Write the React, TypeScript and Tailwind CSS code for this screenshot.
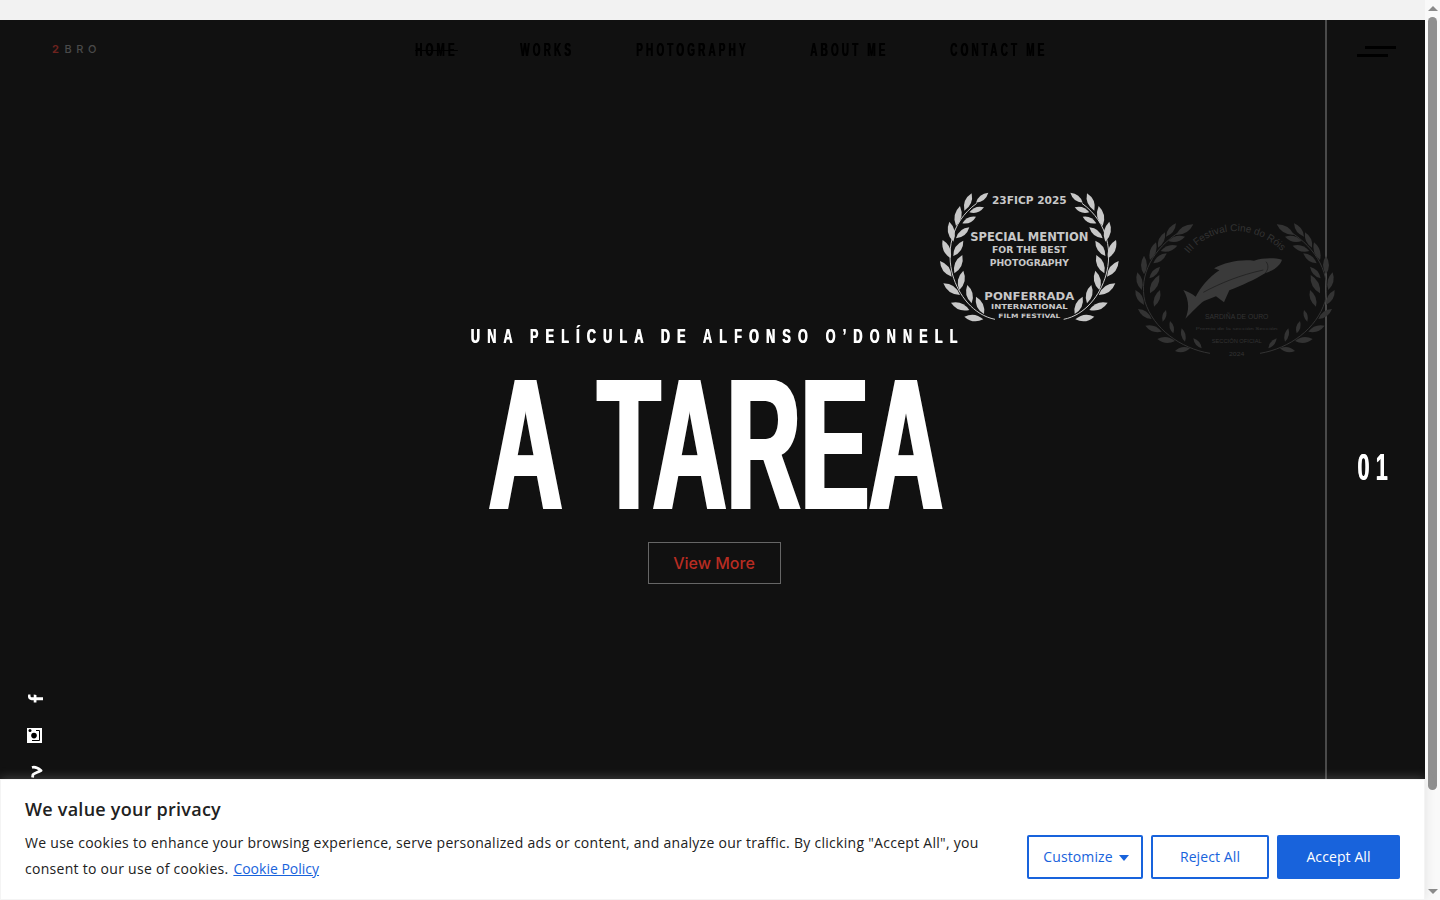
import React from "react";
import { FaFacebookF } from "react-icons/fa";

type Leaf = [number, number, number, number];

function leafPath([bx, by, tx, ty]: Leaf, w: number) {
  const mx = (bx + tx) / 2;
  const my = (by + ty) / 2;
  const dx = tx - bx;
  const dy = ty - by;
  const nx = -dy * w;
  const ny = dx * w;
  return `M${bx} ${by}Q${mx + nx} ${my + ny} ${tx} ${ty}Q${mx - nx} ${my - ny} ${bx} ${by}Z`;
}

const leavesA: Leaf[] = [
  [138, 68, 175, 38], [103, 92, 125, 40], [78, 138, 90, 78], [70, 185, 58, 125], [62, 235, 38, 180],
  [65, 290, 30, 243], [90, 345, 40, 310], [118, 390, 63, 368], [160, 418, 103, 410],
  [118, 97, 162, 82], [97, 130, 138, 110], [78, 175, 118, 142], [70, 228, 100, 182], [73, 280, 97, 225],
  [88, 330, 100, 272], [125, 370, 112, 315], [162, 402, 138, 350],
];

const leavesB: Leaf[] = [
  [138, 60, 190, 28], [108, 65, 138, 25], [84, 98, 105, 52], [60, 135, 78, 82], [42, 178, 42, 122],
  [35, 225, 22, 172], [42, 270, 16, 225], [65, 312, 24, 282], [95, 350, 46, 332], [135, 378, 82, 372], [180, 400, 135, 408],
  [115, 78, 165, 65], [92, 108, 142, 92], [70, 145, 110, 115], [58, 190, 90, 155], [60, 235, 88, 180],
  [72, 275, 90, 225], [98, 320, 108, 285], [130, 355, 120, 318], [165, 380, 155, 340], [215, 400, 190, 370],
];

function Wreath({ leaves, cx, stem, color, w }: { leaves: Leaf[]; cx: number; stem: string; color: string; w: number }) {
  const side = (
    <>
      <path d={stem} fill="none" stroke={color} strokeWidth="3" />
      {leaves.map((l, i) => (
        <path key={i} d={leafPath(l, w)} fill={color} />
      ))}
    </>
  );
  return (
    <>
      {side}
      <g transform={`translate(${cx * 2} 0) scale(-1 1)`}>{side}</g>
    </>
  );
}

function Ponferrada() {
  const t = (s: string, y: number, len: number, size: number) => (
    <text x="298" y={y} textAnchor="middle" textLength={len} lengthAdjust="spacingAndGlyphs" fontSize={size} fontWeight="700" fill="#c8c8c8" fontFamily="'DejaVu Sans', sans-serif">
      {s}
    </text>
  );
  return (
    <svg viewBox="0 0 600 450" className="absolute left-[930px] top-[160px] w-[200px] h-[150px]">
      <Wreath leaves={leavesA} cx={298} w={0.34} color="#c8c8c8" stem="M195 418C130 405 85 345 68 285C50 220 58 130 140 70" />
      {t("23FICP 2025", 71, 224, 31)}
      {t("SPECIAL MENTION", 182, 355, 36)}
      {t("FOR THE BEST", 220, 224, 26)}
      {t("PHOTOGRAPHY", 259, 238, 27)}
      {t("PONFERRADA", 361, 270, 32)}
      {t("INTERNATIONAL", 388, 230, 21)}
      {t("FILM FESTIVAL", 414, 186, 18)}
    </svg>
  );
}

function Sardina() {
  const c = "#333333";
  const t = (s: string, y: number, len: number, size: number) => (
    <text x="320" y={y} textAnchor="middle" textLength={len} lengthAdjust="spacingAndGlyphs" fontSize={size} fill={c} fontFamily="'Liberation Sans', sans-serif">
      {s}
    </text>
  );
  return (
    <svg viewBox="0 0 630 450" className="absolute left-[1130px] top-[195px] w-[210px] h-[150px]">
      <Wreath leaves={leavesB} cx={315} w={0.32} color={c} stem="M240 415C150 400 70 340 45 260C25 180 70 100 150 50" />
      <path id="sardina-arc" d="M175 118C250 25 380 25 465 118" fill="none" />
      <text fontSize="30" fill={c} fontFamily="'Liberation Sans', sans-serif">
        <textPath href="#sardina-arc" startOffset="2">
          III Festival Cine do Róis
        </textPath>
      </text>
      <path
        d="M160 225C172 230 186 236 197 245C212 218 236 186 268 166L252 160C285 142 330 132 372 137C400 128 432 128 456 134C452 150 432 166 405 175C375 194 335 212 298 226L282 262L258 244L222 258C205 270 188 290 166 311C178 285 178 255 160 225Z"
        fill="#3a3a3a"
      />
      <path d="M408 140C416 150 416 162 406 174M220 232C270 205 330 180 400 165" fill="none" stroke="#1a1a1a" strokeWidth="2" />
      {t("SARDIÑA DE OURO", 311, 190, 21)}
      {t("Premio de la sección Sección", 346, 245, 13)}
      {t("SECCIÓN OFICIAL", 385, 150, 17)}
      {t("2024", 424, 46, 18)}
    </svg>
  );
}

function NavLink({ label, cls, strike }: { label: string; cls: string; strike?: boolean }) {
  return (
    <a className={`${cls} block h-[20px] shrink-0`}>
      <span className={`block w-fit origin-left scale-x-[0.55] font-['Liberation_Sans',sans-serif] font-bold text-[18px] leading-[20px] tracking-[5.8px] text-black whitespace-nowrap [text-shadow:1px_0_0_black] ${strike ? "line-through" : ""}`}>
        {label}
      </span>
    </a>
  );
}

function Scrollbar() {
  return (
    <div className="w-[15px] h-full bg-[#f9f9f9] flex flex-col items-center">
      <div className="h-[17px] flex items-center justify-center shrink-0">
        <div className="w-0 h-0 border-x-[5px] border-x-transparent border-b-[5px] border-b-[#8a8a8a]" />
      </div>
      <div className="w-[9px] h-[773px] bg-[#8f8f8f] rounded-[5px] shrink-0" />
      <div className="flex-1 flex items-end pb-[6px]">
        <div className="w-0 h-0 border-x-[5px] border-x-transparent border-t-[5px] border-t-[#8a8a8a]" />
      </div>
    </div>
  );
}

export default function App() {
  return (
    <div className="w-[1440px] h-[900px] overflow-hidden flex font-['Open_Sans',sans-serif]">
      <div className="w-[1425px] h-full flex flex-col relative">
        <div className="h-[20px] bg-[#f2f2f2] shrink-0" />
        <div className="flex-1 bg-[#111111] flex relative overflow-hidden">
          <div className="w-[1325px] shrink-0 flex flex-col items-stretch">
            <header className="h-[58px] flex items-center relative">
              <div className="pl-[52px] w-[415px] shrink-0 text-[11px] font-['Inter',sans-serif] font-medium tracking-[4.6px] leading-none">
                <span className="text-[#6e231f] font-bold">2</span>
                <span className="text-[#4a4a4a] ml-[1px]">BRO</span>
              </div>
              <nav className="flex gap-[63px] pt-[2px]">
                <NavLink label="HOME" cls="w-[42px]" strike />
                <NavLink label="WORKS" cls="w-[53px]" />
                <NavLink label="PHOTOGRAPHY" cls="w-[111px]" />
                <NavLink label="ABOUT ME" cls="w-[77px]" />
                <NavLink label="CONTACT ME" cls="w-[97px]" />
              </nav>
            </header>

            <div className="flex flex-col items-center w-[1432px] mt-[243px]">
              <h2 className="font-['Liberation_Sans',sans-serif] font-bold text-[21px] leading-[30px] tracking-[12px] text-white whitespace-nowrap scale-x-[0.6] [text-shadow:1px_0_0_white] -mr-[3px]">
                UNA PELÍCULA DE ALFONSO O’DONNELL
              </h2>
              <h1 className="mt-[8px] h-[170px] flex items-center font-['Liberation_Sans',sans-serif] font-bold text-[188px] leading-[170px] text-white whitespace-nowrap scale-x-[0.545] [word-spacing:19px] [text-shadow:4px_0_0_white,-4px_0_0_white,2px_0_0_white,-2px_0_0_white]">
                A TAREA
              </h1>
              <a className="mt-[13px] mr-[4px] w-[133px] h-[42px] border border-[#666666] flex items-center justify-center font-['Inter',sans-serif] font-medium text-[16px] text-[#b82c22]">
                View More
              </a>
            </div>

            <div className="mt-[107px] pl-[27px] flex flex-col text-white">
              <div className="h-[37px] flex items-start">
                <FaFacebookF className="w-[15px] h-[15px] -rotate-90 ml-[1px]" />
              </div>
              <div className="h-[37px] flex items-start">
                <svg viewBox="0 0 15 15" className="w-[15px] h-[15px]">
                  <rect width="15" height="15" fill="#fff" />
                  <circle cx="3" cy="2.6" r="1.5" fill="#000" />
                  <circle cx="7" cy="7.6" r="2.8" fill="#000" />
                  <path d="M9 2.5H12.5V12.5H5" fill="none" stroke="#000" strokeWidth="1" />
                </svg>
              </div>
              <div className="h-[37px] flex items-start">
                <svg viewBox="0 0 15 15" className="w-[15px] h-[15px] ml-[2px]">
                  <path d="M3 2.5C6 1.5 9 3 12 5.5C9 7 6 8 4 9.5L3.5 12.5" fill="none" stroke="#fff" strokeWidth="2.8" strokeLinejoin="round" />
                </svg>
              </div>
            </div>
          </div>

          <aside className="w-[100px] border-l-2 border-[#4a4a4a] flex flex-col items-center">
            <div className="h-[58px] w-full relative">
              <div className="absolute left-[38px] top-[26px] w-[31px] h-[3px] bg-black blur-[0.4px]" />
              <div className="absolute left-[30px] top-[34px] w-[31px] h-[3px] bg-black blur-[0.4px]" />
            </div>
            <div className="mt-[366px] font-['Liberation_Sans',sans-serif] font-bold text-[36px] leading-[48px] tracking-[10.5px] text-white scale-x-[0.6] [text-shadow:1px_0_0_white]">
              01
            </div>
          </aside>

          <Ponferrada />
          <Sardina />
        </div>

        <section className="absolute left-0 right-0 bottom-0 h-[121px] bg-white border border-[#f4f4f4] shadow-[0_-1px_10px_0_rgba(172,171,171,0.3)] flex items-start pl-[24px] pr-[24px] text-[#212121]">
          <div className="w-[990px] shrink-0">
            <p className="mt-[17px] text-[18px] leading-[24px] font-semibold tracking-[0.25px]">We value your privacy</p>
            <p className="mt-[9px] text-[14px] leading-[26px] w-[975px] tracking-[0.28px]">
              We use cookies to enhance your browsing experience, serve personalized ads or content, and analyze our traffic. By clicking "Accept All", you consent to our use of cookies.{" "}
              <a className="text-[#1863dc] underline ml-[1px] tracking-normal">Cookie Policy</a>
            </p>
          </div>
          <div className="mt-[55px] ml-[12px] flex gap-[8px] text-[14px] font-normal tracking-[0.1px]">
            <button className="w-[116px] h-[44px] pb-[2px] pl-[2px] border-2 border-[#1863dc] rounded-[2px] text-[#1863dc] flex items-center justify-center gap-[6px]">
              Customize
              <span className="w-0 h-0 border-x-[5px] border-x-transparent border-t-[6px] border-t-[#1863dc] mt-[3px]" />
            </button>
            <button className="w-[118px] h-[44px] pb-[2px] border-2 border-[#1863dc] rounded-[2px] text-[#1863dc]">Reject All</button>
            <button className="w-[123px] h-[44px] pb-[2px] bg-[#1863dc] rounded-[2px] text-white">Accept All</button>
          </div>
        </section>
      </div>
      <Scrollbar />
    </div>
  );
}
